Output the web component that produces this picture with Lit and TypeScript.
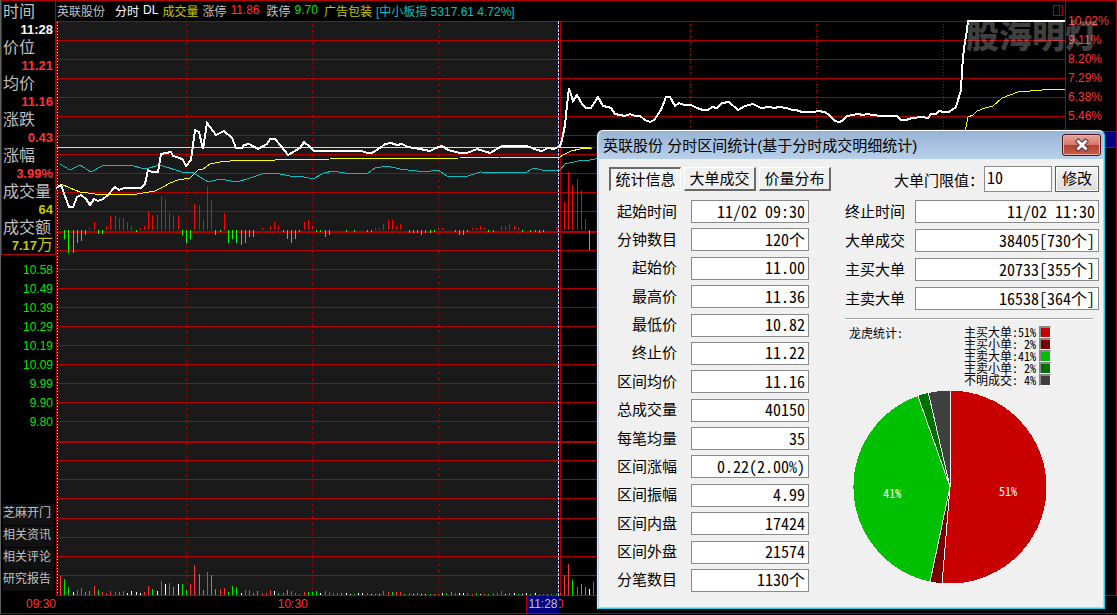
import { LitElement, html, svg, css } from "lit";
import { customElement, property } from "lit/decorators.js";

const RED = "#b00000";

const TONES: Record<string, string> = { r: "#ff3232", g: "#00e600", w: "#ffffff" };

// One entry per minute: colour letter followed by the bar height.
const VOLUME =
  "r19 g16 g8 w3 r5 r7 g3 g4 r9 g5 r3 r2 r4 r3 g3 r4 w2 w4 w3 w2 r3 r9 g6 w4 r14 w11 r12 g8 w11 g11 g5 r11 r30 g21 g5 r23 g20 g6 r6 r7 g3 g9 g8 w2 r5 r5 g2 g4 r2 r2 r5 w4 g2 g2 g5 r4 r2 r1 r3 g3 g3 g4 w2 r4 r3 r2 r2 g2 w2 w1 g1 w2 w2 r2 w1 g1 w1 r4 r3 g3 r3 r3 g1 r2 w1 g2 w1 w1 g1 r1 r1 w2 g2 g3 r2 w2 w2 r2 r1 g2 w1 r1 g1 r2 r2 r4 w1 g2 w2 g1 w1 w2 g1 w2 g1 r1 g1 r1 g1 r2 r20 r31 g15 r8 g11 g8 w6 r13".split(" ");

// Signed height per minute: positive grows upwards, negative hangs below the axis.
const FLOW = [
  0, -9, -23, -23, -13, -11, -5, 2, 8, -4, -4, 4, 14, 14, 12, 12, 8, 4, -2, 2, 4, 19, 15, 15, 34, 31, 17, 15, 15, -5, -13, -9, 26, 25,
  10, 44, 30, -5, -2, 17, -13, -9, -13, -15, -13, -7, -7, 0, 2, 0, 4, 8, 4, -2, -9, -13, -9, -2, 8, 10, 4, -2, -2, -7, -5, 0, 0, 0,
  -2, 0, -2, 0, 0, -2, -2, 2, 2, 6, 10, 10, 4, 6, 0, -3, -3, -3, -5, -3, -3, -2, 2, 2, 0, 0, -2, -5, -5, -2, 2, 2, 4, 2, -2, -2,
  0, 4, 4, 6, 4, 2, -2, 0, -2, -2, -3, -2, 0, 0, 2, 0, 28, 58, 45, 51, 39, 11, -20,
];

const PRICE =
  "56,188 61,185 69,207 73,207 77,197 81,195 86,199 90,205 94,199 98,201 103,199 108,195 115,187 119,190 124,188 141,188 145,184 148,170 152,172 158,172 161,154 171,152 173,156 180,158 183,160 186,166 191,160 193,145 195,130 199,132 203,149 205,136 207,123 216,135 224,131 232,138 236,148 242,148 244,145 249,144 258,149 267,144 270,139 275,139 281,146 288,155 300,148 304,142 310,147 314,151 362,151 367,153 372,153 380,148 385,144 391,143 397,145 402,144 408,147 420,149 430,151 436,148 442,146 448,150 460,153 467,153 477,149 490,153 502,146 527,146 537,150 542,151 548,148 554,149 560,146 562,140 565,125 567,105 569,88 573,101 577,95 582,104 586,108 591,108 598,97 603,106 608,107 611,108 615,114 625,116 630,114 635,116 640,116 645,120 650,122 654,120 661,110 666,97 670,97 675,106 679,103 684,105 691,105 697,108 703,110 708,110 712,107 717,108 722,103 729,102 738,110 745,106 753,104 761,108 770,107 774,108 779,107 787,108 792,110 796,110 802,112 814,112 818,111 825,112 829,115 835,121 839,122 842,121 847,116 858,114 863,115 867,114 880,116 897,116 901,120 906,120 912,118 922,117 928,118 931,114 936,114 939,111 944,112 949,112 956,107 961,90 962,70 964,48 967,30 968,21 1065,21";
const AVERAGE =
  "61,184 70,188 80,192 95,194 108,195 137,194 155,191 163,187 170,183 178,180 190,178 198,170 203,169 210,164 220,162 240,160 275,160 330,159 460,158 500,157 560,157 565,154 571,151 580,149 592,148 700,146 840,142 950,138 965,132 968,117 973,115 977,111 985,108 993,106 1002,98 1018,92 1042,90 1065,89";
const INDEX =
  "60,164 70,170 80,165 91,172 102,166 130,165 145,169 160,165 182,172 192,172 208,182 220,179 237,182 250,178 265,173 275,173 290,176 300,176 313,179 324,173 333,171 345,173 367,174 375,168 387,166 400,169 425,172 438,170 447,176 468,176 480,172 525,173 534,168 542,170 560,170 565,164 578,161 590,160 600,158";

const GRID_ROWS = [
  21, 40, 59, 78, 97, 116, 135, 154, 173, 192, 211, 250, 269, 288, 307, 326, 345, 364, 383, 402, 421, 460, 479, 498, 518, 537, 556, 575,
  595,
];

@customElement("minute-chart")
export class MinuteChart extends LitElement {
  static styles = css`
    :host {
      display: block;
      min-width: 0;
      min-height: 0;
    }
    .plot {
      display: block;
      width: 100%;
      height: 100%;
      overflow: visible;
    }
  `;

  private minuteX(i: number) {
    return Math.round(60 + i * 4.2);
  }

  render() {
    return html`
      <svg class="plot" viewBox="56 21 1009 575" preserveAspectRatio="none" shape-rendering="crispEdges" role="img" aria-label="分时">
        <rect x="57" y="21" width="501" height="574" fill="#1a1a1a" />
        ${GRID_ROWS.map((y) => svg`<rect x="56" y=${y} width="1009" height="1" fill=${RED} />`)}
        ${[231, 441].map((y) => svg`<rect x="56" y=${y} width="1009" height="2" fill=${RED} />`)}
        ${[186, 312, 438, 690, 816, 943].map(
          (x) => svg`<line x1=${x + 0.5} x2=${x + 0.5} y1="24" y2="595" stroke=${RED} stroke-dasharray="1 2" />`,
        )}
        <rect x="56" y="21" width="1" height="575" fill=${RED} />
        <line x1="57.5" x2="57.5" y1="22" y2="595" stroke="#ffff66" stroke-dasharray="1 2" />
        <rect x="560" y="21" width="1" height="575" fill=${RED} />
        ${FLOW.map((v, i) =>
          v === 0
            ? null
            : svg`<rect x=${this.minuteX(i)} y=${v > 0 ? 230 - v : 230} width="1" height=${Math.abs(v)} fill=${v > 0 ? "#ff0000" : "#00ff00"} />`,
        )}
        ${VOLUME.map((entry, i) => {
          const h = Number(entry.slice(1));
          return svg`<rect x=${this.minuteX(i)} y=${595 - h} width="1" height=${h} fill=${TONES[entry[0]]} />`;
        })}
        <polyline points=${INDEX} fill="none" stroke="#00c0c0" />
        <polyline points=${AVERAGE} fill="none" stroke="#ffff00" />
        <rect x="57" y="147" width="534" height="1" fill="#d8d8d8" />
        <rect x="591" y="147" width="474" height="1" fill="#2020a0" />
        <polyline points=${PRICE} fill="none" stroke="#ffffff" stroke-width="2" />
        <rect x="558" y="21" width="1" height="575" fill="#000080" />
        <line x1="558.5" x2="558.5" y1="21" y2="596" stroke="#d8d8d8" stroke-dasharray="3 1" />
      </svg>
    `;
  }
}

interface Slice {
  name: string;
  percent: number;
  share: number;
  color: string;
}

const SLICES: Slice[] = [
  { name: "主买大单", percent: 51, share: 51.3, color: "#c80000" },
  { name: "主买小单", percent: 2, share: 2, color: "#780000" },
  { name: "主卖大单", percent: 41, share: 41.3, color: "#00c000" },
  { name: "主卖小单", percent: 2, share: 1.8, color: "#007000" },
  { name: "不明成交", percent: 4, share: 3.6, color: "#404040" },
];

@customElement("share-pie")
export class SharePie extends LitElement {
  static styles = css`
    :host {
      display: block;
    }
    .pie {
      display: block;
      width: 196px;
      height: 196px;
    }
    .share {
      font: 12px "Noto Sans CJK SC", sans-serif;
      font-feature-settings: "hwid";
      fill: #fff;
      text-anchor: middle;
    }
  `;

  private point(share: number, r: number) {
    const a = (share / 100) * Math.PI * 2;
    return [Math.sin(a) * r, -Math.cos(a) * r];
  }

  render() {
    let start = 0;
    const parts = SLICES.map((s) => {
      const [x1, y1] = this.point(start, 97);
      const [x2, y2] = this.point(start + s.share, 97);
      const [tx, ty] = this.point(start + s.share / 2, 58);
      start += s.share;
      return svg`
        <path d="M0 0L${x1} ${y1}A97 97 0 ${s.share > 50 ? 1 : 0} 1 ${x2} ${y2}Z" fill=${s.color} stroke="#f0f0f0" shape-rendering="crispEdges" />
        ${s.percent > 10 ? svg`<text class="share" x=${tx} y=${ty + 7}>${s.percent}%</text>` : null}
      `;
    });
    return html`<svg class="pie" viewBox="-98 -98 196 196" role="img" aria-label="龙虎统计">${parts}</svg>`;
  }
}

const LEFT_FIELDS = [
  ["起始时间", "11/02 09:30"],
  ["分钟数目", "120个"],
  ["起始价", "11.00"],
  ["最高价", "11.36"],
  ["最低价", "10.82"],
  ["终止价", "11.22"],
  ["区间均价", "11.16"],
  ["总成交量", "40150"],
  ["每笔均量", "35"],
  ["区间涨幅", "0.22(2.00%)"],
  ["区间振幅", "4.99"],
  ["区间内盘", "17424"],
  ["区间外盘", "21574"],
  ["分笔数目", "1130个"],
];

const RIGHT_FIELDS = [
  ["终止时间", "11/02 11:30"],
  ["大单成交", "38405[730个]"],
  ["主买大单", "20733[355个]"],
  ["主卖大单", "16538[364个]"],
];

@customElement("range-dialog")
export class RangeDialog extends LitElement {
  static styles = css`
    :host {
      display: flex;
      flex-direction: column;
      box-sizing: border-box;
      border: 1px solid #2cc8e8;
      border-top-color: #fff;
      border-left-color: #d4ecf8;
      border-radius: 6px 6px 0 0;
      background: #b7cfe8;
      padding: 0 1px 1px;
      color: #000;
      font: 15px "Liberation Sans", "Noto Sans CJK SC", sans-serif;
      box-shadow: 0 0 2px #555;
    }
    .title {
      display: flex;
      align-items: center;
      justify-content: space-between;
      height: 28px;
      padding: 0 2px 0 4px;
      border-radius: 5px 5px 0 0;
      background: linear-gradient(#98b4d2, #b8d0ea);
    }
    .caption {
      margin: 0;
      padding-bottom: 1px;
      font-size: 15px;
      font-weight: 400;
    }
    .close {
      display: flex;
      align-items: center;
      justify-content: center;
      width: 39px;
      height: 22px;
      padding: 0;
      border: 1px solid #4c1620;
      border-radius: 3px;
      background: linear-gradient(#e6a59a, #d3796b 48%, #b4402c 52%, #c8604c);
      box-shadow: inset 0 0 0 1px #e9b3a8;
    }
    .cross {
      width: 16px;
      height: 14px;
    }
    .body {
      flex: 1;
      display: flex;
      flex-direction: column;
      gap: 7px;
      min-height: 0;
      padding: 6px 4px 15px 10px;
      background: #f0f0f0;
    }
    .tools {
      display: flex;
      align-items: center;
      gap: 3px;
      height: 28px;
    }
    .tab {
      box-sizing: border-box;
      width: 72px;
      height: 24px;
      padding: 0;
      border: 1px solid #fff;
      border-right: 2px solid #696969;
      border-bottom: 2px solid #696969;
      background: #f0f0f0;
      color: #000;
      font: inherit;
      line-height: 22px;
      white-space: nowrap;
    }
    .tab.active {
      border: 1px solid #fff;
      border-top: 2px solid #696969;
      border-left: 2px solid #696969;
      background: repeating-conic-gradient(#fff 0 25%, #ececec 0 50%) 0 0 / 2px 2px;
      line-height: 20px;
    }
    .limit {
      display: flex;
      align-items: center;
      margin-left: auto;
    }
    .limit-input {
      box-sizing: border-box;
      width: 68px;
      height: 26px;
      padding: 0 2px 4px;
      text-align: left;
    }
    .apply {
      width: 44px;
      height: 26px;
      padding: 0 0 3px;
      border: 1px solid #606060;
      background: linear-gradient(#f4f4f4, #dcdcdc);
      box-shadow: inset 0 0 0 1px #fff;
      color: #000;
      font: inherit;
    }
    .columns {
      flex: 1;
      display: flex;
      gap: 36px;
      min-height: 0;
    }
    .fields {
      display: flex;
      flex-direction: column;
      justify-content: space-between;
    }
    .row {
      display: grid;
      grid-template-columns: 68px 118px;
      gap: 14px;
      align-items: center;
    }
    .details {
      flex: 1;
      display: flex;
      flex-direction: column;
      min-width: 0;
    }
    .details-fields {
      display: flex;
      flex-direction: column;
      gap: 6px;
    }
    .details .row {
      grid-template-columns: 60px 1fr;
      gap: 10px;
    }
    .name {
      text-align: right;
      line-height: 20px;
      white-space: nowrap;
    }
    .box {
      box-sizing: border-box;
      min-width: 0;
      border: 1px solid #8a8a8a;
      border-radius: 0;
      background: #fff;
      color: #000;
      font: 16px "Noto Sans CJK SC", sans-serif;
      font-feature-settings: "hwid";
      outline: none;
    }
    .row .box {
      width: 100%;
      height: 23px;
      padding: 0 3px 2px;
      text-align: right;
    }
    .divider {
      width: 248px;
      margin: 8px 0 0;
      border: 0;
      border-top: 1px solid #a0a0a0;
      border-bottom: 1px solid #fff;
    }
    .summary {
      display: flex;
      justify-content: space-between;
      padding: 6px 48px 0 4px;
      font: 12px/12px "Noto Sans CJK SC", sans-serif;
      font-feature-settings: "hwid";
    }
    .summary-title {
      margin: 1px 0 0;
      font-size: 12px;
      font-weight: 400;
    }
    .legend {
      display: grid;
      margin: 0;
      padding: 0;
      list-style: none;
    }
    .entry {
      display: flex;
      align-items: center;
      gap: 3px;
      white-space: pre;
    }
    .swatch {
      box-sizing: border-box;
      width: 12px;
      height: 12px;
      border: 1px solid #fff;
      border-top: 2px solid #888;
      border-left: 2px solid #888;
    }
    .chart {
      padding: 3px 0 0 7px;
    }
  `;

  private row(prefix: string, [name, value]: string[], i: number) {
    const id = `${prefix}-${i}`;
    return html`<div class="row">
      <label class="name" for=${id}>${name}</label>
      <input class="box" id=${id} readonly .value=${value} />
    </div>`;
  }

  render() {
    return html`
      <header class="title">
        <h2 class="caption">英联股份 分时区间统计(基于分时成交明细统计)</h2>
        <button class="close" aria-label="关闭">
          <svg class="cross" viewBox="0 0 16 14">
            <path d="M4.5 3.5L11.5 10.5M11.5 3.5L4.5 10.5" stroke="#5a3038" stroke-width="5" stroke-linecap="square" />
            <path d="M4.5 3.5L11.5 10.5M11.5 3.5L4.5 10.5" stroke="#fff" stroke-width="3" stroke-linecap="square" />
          </svg>
        </button>
      </header>
      <div class="body">
        <div class="tools">
          <button class="tab active">统计信息</button>
          <button class="tab">大单成交</button>
          <button class="tab">价量分布</button>
          <label class="limit">大单门限值：<input class="box limit-input" value="10" /></label>
          <button class="apply">修改</button>
        </div>
        <div class="columns">
          <div class="fields">${LEFT_FIELDS.map((f, i) => this.row("stat", f, i))}</div>
          <div class="details">
            <div class="details-fields">${RIGHT_FIELDS.map((f, i) => this.row("deal", f, i))}</div>
            <hr class="divider" />
            <div class="summary">
              <h3 class="summary-title">龙虎统计:</h3>
              <ul class="legend">
                ${SLICES.map(
                  (s) => html`<li class="entry"><span>${s.name}:${String(s.percent).padStart(2, " ")}%</span><span class="swatch" style="background:${s.color}"></span></li>`,
                )}
              </ul>
            </div>
            <div class="chart"><share-pie></share-pie></div>
          </div>
        </div>
      </div>
    `;
  }
}

const QUOTES = [
  ["时间", "11:28", "white"],
  ["价位", "11.21", "red"],
  ["均价", "11.16", "red"],
  ["涨跌", "0.43", "red"],
  ["涨幅", "3.99%", "red"],
  ["成交量", "64", "gold"],
  ["成交额", "7.17", "gold"],
];

@customElement("app-root")
export class AppRoot extends LitElement {
  @property() stock = "英联股份";

  static styles = css`
    :host {
      position: relative;
      display: grid;
      grid-template: 21px minmax(0, 1fr) 19px / 56px minmax(0, 1fr) 52px;
      box-sizing: border-box;
      height: 100vh;
      min-height: 600px;
      overflow: hidden;
      background: #000;
      color: #c0c0c0;
      font: 12px "Liberation Sans", "Noto Sans CJK SC", sans-serif;
    }
    .white {
      color: #fff;
    }
    .red {
      color: #ff3232;
    }
    .green {
      color: #00e600;
    }
    .gold {
      color: #c8c800;
    }
    .cyan {
      color: #00c0c0;
    }
    .side {
      grid-area: 1 / 1 / 3 / 2;
      display: flex;
      flex-direction: column;
      border-left: 1px solid #606060;
    }
    .quotes {
      box-sizing: border-box;
      margin: 0;
      padding: 1px 1px 0;
      border: 1px solid #b00000;
      line-height: 18px;
    }
    .term {
      height: 18px;
      font-size: 16px;
      line-height: 20px;
    }
    .figure {
      height: 18px;
      margin: 0;
      padding-right: 1px;
      font-size: 13px;
      font-weight: 700;
      line-height: 20px;
      text-align: right;
      white-space: nowrap;
    }
    .unit {
      font-size: 16px;
      font-weight: 400;
      line-height: 16px;
    }
    .levels {
      margin: 6px 3px 0 0;
      padding: 0;
      list-style: none;
      line-height: 19px;
      text-align: right;
    }
    .links {
      display: grid;
      gap: 1px;
      margin: auto 2px 5px;
    }
    .link {
      height: 21px;
      background: #111;
      color: #c0c0c0;
      line-height: 18px;
      text-decoration: none;
      white-space: nowrap;
    }
    .head {
      display: flex;
      align-items: center;
      gap: 4px;
      border-top: 1px solid #b00000;
      padding: 0 0 2px 1px;
      white-space: nowrap;
    }
    .stock {
      margin: 0 6px 0 0;
      font-size: 12px;
      font-weight: 400;
    }
    .limit-up {
      margin-right: 3px;
    }
    .sector {
      margin-left: 2px;
    }
    .panel-toggle {
      width: 11px;
      height: 11px;
      margin: 0 1px 0 auto;
      padding: 0;
      border: 0;
      background: none;
    }
    .panel-icon {
      display: block;
      width: 11px;
      height: 11px;
    }
    .scale {
      grid-area: 1 / 3 / 3 / 4;
      position: relative;
      border: solid #b00000;
      border-width: 1px;
    }
    .ratios {
      margin: 0;
      padding: 11px 0 0 2px;
      list-style: none;
      line-height: 19px;
    }
    .tag {
      position: absolute;
      top: 130px;
      right: 0;
      box-sizing: border-box;
      width: 50px;
      height: 17px;
      border: solid #b00000;
      border-width: 1px 0;
      background: #000080;
    }
    .times {
      grid-area: 3 / 1 / 4 / 4;
      display: grid;
      grid-template-columns: 56px minmax(0, 252fr) minmax(0, 256fr) minmax(0, 553fr);
      box-sizing: border-box;
      height: 18px;
      border-bottom: 1px solid #b00000;
      border-left: 1px solid #606060;
      line-height: 17px;
      text-align: right;
    }
    .cell {
      position: relative;
      padding-right: 1px;
    }
    .cursor {
      position: absolute;
      top: 0;
      right: 6px;
      padding: 0 1px;
      border-left: 1px solid #b00000;
      background: #000080;
      color: #c0c0c0;
    }
    .watermark {
      position: absolute;
      top: 11px;
      right: 19px;
      color: rgba(255, 255, 255, 0.25);
      font: 900 33px/46px "Noto Sans CJK SC", sans-serif;
      pointer-events: none;
    }
    .dialog {
      position: absolute;
      top: 130px;
      right: 12px;
      bottom: 6px;
      width: 508px;
    }
  `;

  render() {
    return html`
      <aside class="side">
        <dl class="quotes">
          ${QUOTES.map(
            ([term, value, tone], i) => html`
              <dt class="term">${term}</dt>
              <dd class="figure ${tone}">${value}${i === 6 ? html`<span class="unit">万</span>` : null}</dd>
            `,
          )}
        </dl>
        <ul class="levels green">
          ${["10.58", "10.49", "10.39", "10.29", "10.19", "10.09", "9.99", "9.90", "9.80"].map((v) => html`<li>${v}</li>`)}
        </ul>
        <nav class="links">
          ${["芝麻开门", "相关资讯", "相关评论", "研究报告"].map((t) => html`<a class="link" href="#">${t}</a>`)}
        </nav>
      </aside>
      <header class="head">
        <h1 class="stock">${this.stock}</h1>
        <span class="white">分时</span>
        <span class="white">DL</span>
        <span class="gold">成交量</span>
        <span>涨停</span>
        <span class="red limit-up">11.86</span>
        <span>跌停</span>
        <span class="green">9.70</span>
        <span class="gold sector">广告包装</span>
        <span class="cyan">[中小板指 5317.61 4.72%]</span>
        <button class="panel-toggle" aria-label="侧栏">
          <svg class="panel-icon" viewBox="0 0 11 11" shape-rendering="crispEdges">
            <path d="M0.5 0.5H9.5V10.5H0.5ZM6.5 0.5V10.5" fill="none" stroke="#b00000" />
          </svg>
        </button>
      </header>
      <minute-chart></minute-chart>
      <div class="scale">
        <ul class="ratios red">
          ${["10.02%", "9.11%", "8.20%", "7.29%", "6.38%", "5.46%"].map((v) => html`<li>${v}</li>`)}
        </ul>
        <div class="tag"></div>
      </div>
      <footer class="times red">
        <span class="cell">09:30</span>
        <span class="cell">10:30</span>
        <span class="cell">11:30<span class="cursor">11:28</span></span>
      </footer>
      <div class="watermark">股海明灯</div>
      <range-dialog class="dialog"></range-dialog>
    `;
  }
}
